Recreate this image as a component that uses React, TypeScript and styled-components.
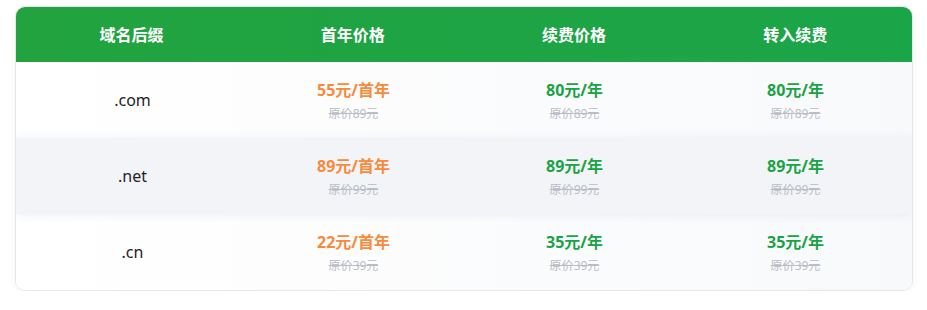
import React from 'react';
import styled, { createGlobalStyle } from 'styled-components';

const GlobalStyle = createGlobalStyle`
    body {
        margin: 0;
        background: #ffffff;
        font-family: "Noto Sans", "Noto Sans CJK SC", sans-serif;
    }
`;

const Page = styled.div`
    padding: 6px 14px 0 15px;
`;

const Table = styled.div`
    border: 1px solid #e4e8ee;
    border-radius: 10px;
    overflow: hidden;
    box-shadow: 0 2px 6px rgba(30, 40, 60, 0.04);
`;

const HeaderRow = styled.div`
    display: grid;
    grid-template-columns: repeat(4, 1fr);
    height: 56px;
    align-items: center;
    padding: 0 7px 0 6px;
    background: linear-gradient(90deg, #22a33f 0%, #1ba549 100%);
    margin: -1px -1px 0 -1px;
`;

const HeaderCell = styled.div`
    text-align: center;
    color: #ffffff;
    font-size: 16px;
    font-weight: 700;
    padding-bottom: 1px;
`;

const Row = styled.div<{ $alt?: boolean }>`
    display: grid;
    grid-template-columns: repeat(4, 1fr);
    height: 76px;
    align-items: center;
    padding: 0 6px;
    position: relative;
    background: ${p => p.$alt
        ? '#f2f4f8'
        : 'linear-gradient(90deg, #ffffff 0%, #f8f9fb 100%)'};
    box-shadow: ${p => p.$alt ? '0 3px 8px rgba(40, 50, 70, 0.05), 0 -3px 8px rgba(40, 50, 70, 0.03)' : 'none'};
    z-index: ${p => p.$alt ? 1 : 0};
`;

const DomainCell = styled.div`
    text-align: center;
    font-size: 16px;
    color: #1f2329;
`;

const PriceCell = styled.div`
    display: flex;
    flex-direction: column;
    align-items: center;
    gap: 5px;
`;

const Price = styled.div<{ $tone: 'orange' | 'green' }>`
    font-size: 16px;
    font-weight: 700;
    line-height: 22px;
    color: ${p => p.$tone === 'orange' ? '#f78a3b' : '#1aa345'};
`;

const Original = styled.div`
    font-size: 12px;
    line-height: 16px;
    color: #b9bdc6;
    text-decoration: line-through;
`;

const rows = [
    { tld: '.com', first: '55', renew: '80', transfer: '80', orig: '89' },
    { tld: '.net', first: '89', renew: '89', transfer: '89', orig: '99' },
    { tld: '.cn', first: '22', renew: '35', transfer: '35', orig: '39' },
];

const App: React.FC = () => {
    return (
        <Page>
            <GlobalStyle />
            <Table>
                <HeaderRow>
                    <HeaderCell>域名后缀</HeaderCell>
                    <HeaderCell>首年价格</HeaderCell>
                    <HeaderCell>续费价格</HeaderCell>
                    <HeaderCell>转入续费</HeaderCell>
                </HeaderRow>
                {rows.map((r, i) => (
                    <Row key={r.tld} $alt={i === 1}>
                        <DomainCell>{r.tld}</DomainCell>
                        <PriceCell>
                            <Price $tone="orange">{r.first}元/首年</Price>
                            <Original>原价{r.orig}元</Original>
                        </PriceCell>
                        <PriceCell>
                            <Price $tone="green">{r.renew}元/年</Price>
                            <Original>原价{r.orig}元</Original>
                        </PriceCell>
                        <PriceCell>
                            <Price $tone="green">{r.transfer}元/年</Price>
                            <Original>原价{r.orig}元</Original>
                        </PriceCell>
                    </Row>
                ))}
            </Table>
        </Page>
    );
}

export default App;
